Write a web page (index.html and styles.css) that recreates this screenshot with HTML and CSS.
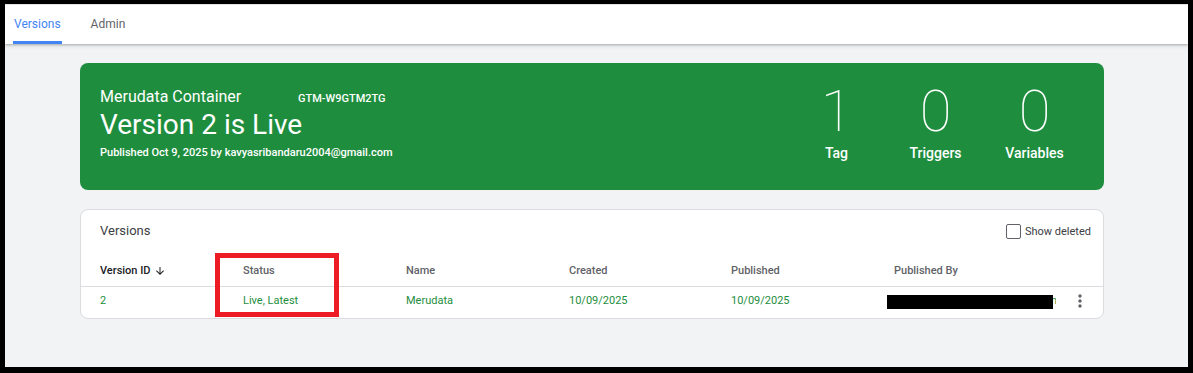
FILE: index.html
```html
<!DOCTYPE html>
<html lang="en">
<head>
  <meta charset="UTF-8"/>
  <title>Versions</title>
  <link rel="stylesheet" href="styles.css">
</head>
<body>
  <div class="frame">
    <header class="tabs">
      <a class="tab active">Versions</a>
      <a class="tab">Admin</a>
    </header>

    <main class="page">
      <section class="summary">
        <div class="summary-info">
          <div class="summary-head">
            <span class="container-name">Merudata Container</span>
            <span class="container-id">GTM-W9GTM2TG</span>
          </div>
          <h1 class="summary-title">Version 2 is Live</h1>
          <p class="summary-meta">Published Oct 9, 2025 by kavyasribandaru2004@gmail.com</p>
        </div>
        <div class="stats">
          <div class="stat"><div class="stat-num">1</div><div class="stat-label">Tag</div></div>
          <div class="stat"><div class="stat-num">0</div><div class="stat-label">Triggers</div></div>
          <div class="stat"><div class="stat-num">0</div><div class="stat-label">Variables</div></div>
        </div>
      </section>

      <section class="versions">
        <div class="versions-head">
          <h2>Versions</h2>
          <label class="show-deleted"><span class="checkbox"></span>Show deleted</label>
        </div>

        <div class="vrow vrow-head">
          <div class="sorted">Version ID
            <svg class="sort-icon" viewBox="0 0 24 24"><path d="M20 12l-1.41-1.41L13 16.17V4h-2v12.17l-5.58-5.59L4 12l8 8 8-8z"/></svg>
          </div>
          <div>Status</div>
          <div>Name</div>
          <div>Created</div>
          <div>Published</div>
          <div>Published By</div>
          <div></div>
        </div>

        <div class="vrow vrow-data">
          <div>2</div>
          <div>Live, Latest</div>
          <div>Merudata</div>
          <div>10/09/2025</div>
          <div>10/09/2025</div>
          <div class="publisher">
            <span class="email">kavyasribandaru2004@gmail.com</span>
            <span class="redact"></span>
          </div>
          <div class="kebab">
            <svg viewBox="0 0 24 24"><path d="M12 8c1.1 0 2-.9 2-2s-.9-2-2-2-2 .9-2 2 .9 2 2 2zm0 2c-1.1 0-2 .9-2 2s.9 2 2 2 2-.9 2-2-.9-2-2-2zm0 6c-1.1 0-2 .9-2 2s.9 2 2 2 2-.9 2-2-.9-2-2-2z"/></svg>
          </div>
        </div>

        <div class="highlight"></div>
      </section>
    </main>
  </div>
</body>
</html>
```

FILE: styles.css
```css
/* COLORS */
:root {
  --bg-page: #f1f3f4;
  --green: #1e8e3e;
  --blue: #4285f4;
  --border: #dadce0;
  --text-dark: #202124;
  --text: #3c4043;
  --text-muted: #5f6368;
  --annot: #ed1c24;
}

* { box-sizing:border-box; margin:0; padding:0 }
html, body {
  background:#000;
  font-family:Roboto, 'Liberation Sans', Arial, sans-serif;
  color: var(--text);
}
body { height:373px; overflow:hidden; }

.frame {
  margin:4px 5px 6px 5px;
  height:363px;
  background: var(--bg-page);
  overflow:hidden;
}

/* TABS */
.tabs {
  position:relative;
  z-index:1;
  display:flex;
  gap:28px;
  height:40px;
  padding-left:8px;
  background:#fff;
  border-top:1px solid #e3e3e3;
  box-shadow:0 1px 2px rgba(60,64,67,.3), 0 2px 4px rgba(60,64,67,.12);
}
.tab {
  padding:11px 1px 0;
  font-size:12px;
  line-height:16px;
  color: var(--text-muted);
  border-bottom:3px solid transparent;
  cursor:pointer;
}
.tab.active {
  color: var(--blue);
  border-bottom-color: var(--blue);
}

/* PAGE */
.page {
  padding:19px 84px 0 75px;
}

/* SUMMARY BANNER */
.summary {
  display:flex;
  justify-content:space-between;
  height:127px;
  padding:0 20px;
  border-radius:8px;
  background: var(--green);
  color:#fff;
}
.summary-info { padding-top:24px; }
.summary-head {
  display:flex;
  align-items:baseline;
  line-height:20px;
}
.container-name { font-size:16px; width:198px; }
.container-id { font-size:11px; font-weight:500; }
.summary-title {
  font-size:28px;
  line-height:32px;
  font-weight:400;
}
.summary-meta {
  margin-top:4px;
  font-size:11px;
  line-height:16px;
  font-weight:500;
}
.stats { display:flex; padding-top:19px; }
.stat { width:99px; text-align:center; }
.stat-num {
  font-size:58px;
  line-height:58px;
  font-weight:100;
}
.stat-label {
  margin-top:5px;
  font-size:14px;
  line-height:16px;
  font-weight:500;
}

/* VERSIONS TABLE */
.versions {
  position:relative;
  margin-top:19px;
  background:#fff;
  border:1px solid var(--border);
  border-radius:8px;
}
.versions-head {
  display:flex;
  justify-content:space-between;
  align-items:center;
  height:31px;
  padding:11px 12px 0 19px;
}
.versions-head h2 {
  font-size:13px;
  line-height:20px;
  font-weight:400;
  color: var(--text);
}
.show-deleted {
  display:flex;
  align-items:center;
  gap:4px;
  font-size:11px;
  color: var(--text);
}
.checkbox {
  width:15px;
  height:15px;
  border:1.5px solid var(--text-muted);
  border-radius:2px;
}

.vrow {
  display:grid;
  grid-template-columns:143px 163px 163px 162px 163px 1fr 20px;
  padding:0 13px 0 19px;
  font-size:11px;
  line-height:16px;
}
.vrow-head {
  padding-top:22px;
  padding-bottom:7px;
  border-bottom:1px solid var(--border);
  color: var(--text-muted);
  font-weight:500;
}
.sorted {
  display:flex;
  align-items:center;
  color: var(--text-dark);
}
.sort-icon {
  width:12px;
  height:12px;
  margin-left:3px;
  fill: var(--text-dark);
}
.vrow-data {
  padding-top:6px;
  padding-bottom:9px;
  color: var(--green);
}
.publisher { position:relative; }
.email {
  display:inline-block;
  max-width:162px;
  overflow:hidden;
  white-space:nowrap;
  vertical-align:top;
}
.redact {
  position:absolute;
  left:-7px;
  top:2px;
  width:166px;
  height:14px;
  background:#000;
}
.kebab svg {
  display:block;
  width:20px;
  height:20px;
  margin:-2px 0;
  fill: var(--text-muted);
}

/* ANNOTATION */
.highlight {
  position:absolute;
  left:134px;
  top:43px;
  width:124px;
  height:64px;
  border:5px solid var(--annot);
}
```
